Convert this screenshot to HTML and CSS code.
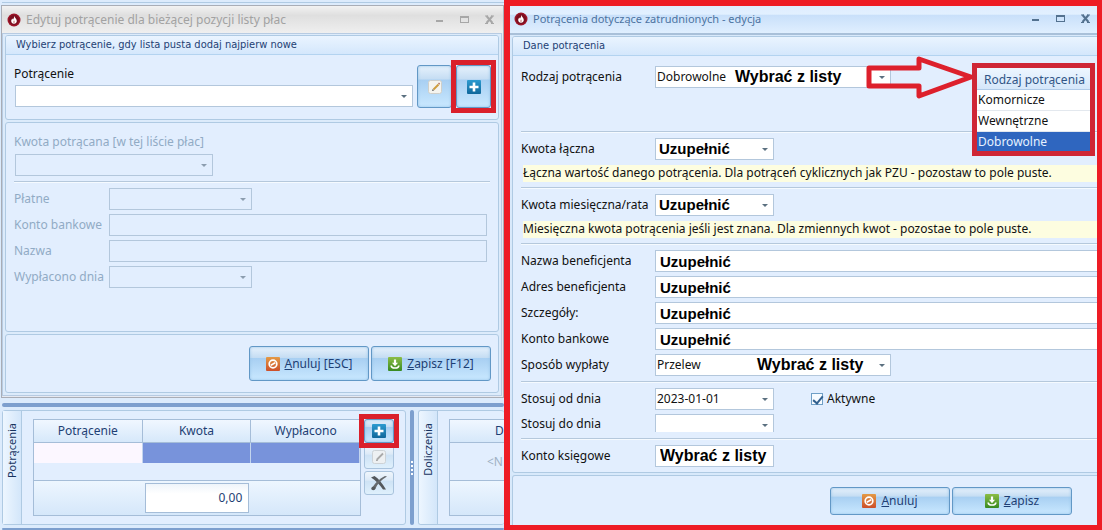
FILE: index.html
```html
<!DOCTYPE html>
<html lang="pl">
<head>
<meta charset="utf-8">
<title>Potrącenia</title>
<link rel="stylesheet" href="styles.css">
</head>
<body>
<svg class="symbols" aria-hidden="true">
  <defs>
    <linearGradient id="g-blue" x1="0" y1="0" x2="0" y2="1"><stop offset="0" stop-color="#2d9bd0"/><stop offset="1" stop-color="#0f679b"/></linearGradient>
    <linearGradient id="g-orange" x1="0" y1="0" x2="0" y2="1"><stop offset="0" stop-color="#e39a45"/><stop offset="1" stop-color="#cc4f2a"/></linearGradient>
    <linearGradient id="g-green" x1="0" y1="0" x2="0" y2="1"><stop offset="0" stop-color="#8cbd46"/><stop offset="1" stop-color="#378a22"/></linearGradient>
  </defs>
  <symbol id="flame" viewBox="0 0 14 14"><circle cx="7" cy="7" r="6.5" fill="#9c1428"/><circle cx="7" cy="7" r="5" fill="#7a0f20"/><path d="M7.2 2.8c.2 1.8 2.6 2.8 2.6 5.2 0 1.6-1.2 2.8-2.8 2.8S4.200 9.600 4.200 8c0-1.200.7-1.800 1-2.600.4.500.6.800.9 1.100C6.900 5.400 7.300 4.200 7.200 2.800z" fill="#fff"/><path d="M7 7.200c.9.900 1 1.500 1 1.900a1 1 0 0 1-2 0c0-.6.600-1 1-1.900z" fill="#d9a3a0"/></symbol>
  <symbol id="plus" viewBox="0 0 14 14"><rect width="14" height="14" rx="1" fill="url(#g-blue)"/><path d="M7 2.500v9M2.500 7h9" stroke="#fff" stroke-width="2.600"/></symbol>
  <symbol id="pencil" viewBox="0 0 14 14"><rect x=".5" y=".5" width="13" height="13" rx="2" fill="#f5f4ef" stroke="#cfcfca"/><path d="M5.500 9.500L10.500 4.500" stroke="#cf9d3e" stroke-width="2"/><path d="M4 11l.7-2 1.400 1.400z" fill="#555"/><path d="M10 3.500l1-1 1.200 1.200-1 1z" fill="#b5725c"/></symbol>
  <symbol id="pencil-off" viewBox="0 0 14 14"><rect x=".5" y=".5" width="13" height="13" rx="2" fill="#edf0f2" stroke="#cdd2d6"/><path d="M5 9.500L11 3.500" stroke="#a9a9a9" stroke-width="1.800"/><path d="M4 11l.7-2 1.400 1.400z" fill="#888"/></symbol>
  <symbol id="cancel" viewBox="0 0 14 14"><rect width="14" height="14" rx="1" fill="url(#g-orange)"/><circle cx="7" cy="7" r="3.800" fill="none" stroke="#fff" stroke-width="1.700"/><path d="M4.800 8.200l4.400-2.400" stroke="#fff" stroke-width="1.600"/></symbol>
  <symbol id="save" viewBox="0 0 14 14"><rect width="14" height="14" rx="1" fill="url(#g-green)"/><path d="M7 2.500V7" stroke="#fff" stroke-width="2.200"/><path d="M4 5.800h6L7 9.200z" fill="#fff"/><path d="M3.200 8.500c0 3.400 7.600 3.400 7.600 0" fill="none" stroke="#fff" stroke-width="1.600"/></symbol>
  <symbol id="delete" viewBox="0 0 18 16"><path d="M1 2.500L4.500 1C8.500 3.500 12.500 8.500 16 14.500L13 14.500C10 10 6 5.500 1 2.500z" fill="#54585c"/><path d="M17 1.500C11.500 4.500 7.500 8.500 5 14.500L1.500 14.500C4 9 9 4 15 1z" fill="#666a6e"/><circle cx="3.300" cy="13.300" r="1.900" fill="#54585c"/></symbol>
  <symbol id="minimize" viewBox="0 0 12 12"><path d="M2 7h7" stroke="currentColor" stroke-width="2"/></symbol>
  <symbol id="maximize" viewBox="0 0 12 12"><rect x="1.500" y="2.500" width="8" height="6" fill="none" stroke="currentColor"/><path d="M1 3h9" stroke="currentColor" stroke-width="2"/></symbol>
  <symbol id="close" viewBox="0 0 12 12"><path d="M2.500 2L8.500 9M8.500 2L2.500 9" stroke="currentColor" stroke-width="2"/><path d="M1 2h3M7 2h3M1 9.500h3M7 9.500h3" stroke="currentColor"/></symbol>
</svg>

<main class="screen">
  <div class="left">
    <div class="strip"></div>
    <section class="window window-inactive">
      <header class="titlebar">
        <svg class="app-icon"><use href="#flame"/></svg>
        <h1 class="title">Edytuj potrącenie dla bieżącej pozycji listy płac</h1>
        <div class="controls">
          <button type="button" class="control" aria-label="Minimalizuj"><svg><use href="#minimize"/></svg></button>
          <button type="button" class="control" aria-label="Maksymalizuj"><svg><use href="#maximize"/></svg></button>
          <button type="button" class="control" aria-label="Zamknij"><svg><use href="#close"/></svg></button>
        </div>
      </header>
      <div class="content">
        <div class="group">
          <h2 class="group-title">Wybierz potrącenie, gdy lista pusta dodaj najpierw nowe</h2>
          <div class="pick">
            <div class="pick-field">
              <label for="deduction">Potrącenie</label>
              <span class="combo"><select id="deduction"><option></option></select></span>
            </div>
            <button type="button" class="btn btn-tall" aria-label="Edytuj"><svg class="icon"><use href="#pencil"/></svg></button>
            <span class="marked"><button type="button" class="btn btn-tall" aria-label="Dodaj"><svg class="icon"><use href="#plus"/></svg></button></span>
          </div>
        </div>
        <div class="group group-details">
          <label for="amount">Kwota potrącana [w tej liście płac]</label>
          <span class="combo combo-amount"><select id="amount" disabled><option></option></select></span>
          <hr class="rule">
          <div class="details">
            <label for="paid">Płatne</label><span class="combo combo-short"><select id="paid" disabled><option></option></select></span>
            <label for="bank">Konto bankowe</label><input class="text" id="bank" type="text" disabled>
            <label for="name">Nazwa</label><input class="text" id="name" type="text" disabled>
            <label for="payday">Wypłacono dnia</label><span class="combo combo-short"><select id="payday" disabled><option></option></select></span>
          </div>
        </div>
        <div class="group actions">
          <button type="button" class="btn btn-action"><svg class="icon"><use href="#cancel"/></svg><span><u>A</u>nuluj [ESC]</span></button>
          <button type="button" class="btn btn-action"><svg class="icon"><use href="#save"/></svg><span><u>Z</u>apisz [F12]</span></button>
        </div>
      </div>
    </section>
    <div class="splitter"></div>
    <div class="docks">
      <section class="dock">
        <h2 class="tab">Potrącenia</h2>
        <div class="dock-body">
          <table class="grid">
            <thead><tr><th>Potrącenie</th><th>Kwota</th><th>Wypłacono</th></tr></thead>
            <tbody>
              <tr class="row-current"><td></td><td></td><td></td></tr>
              <tr class="row-blank"><td colspan="3"></td></tr>
            </tbody>
            <tfoot><tr><td></td><td><div class="total">0,00</div></td><td></td></tr></tfoot>
          </table>
          <div class="tools">
            <span class="marked marked-tool"><button type="button" class="btn btn-tool" aria-label="Dodaj potrącenie"><svg class="icon"><use href="#plus"/></svg></button></span>
            <button type="button" class="btn btn-tool btn-pale" aria-label="Edytuj potrącenie" disabled><svg class="icon"><use href="#pencil-off"/></svg></button>
            <button type="button" class="btn btn-tool btn-pale" aria-label="Usuń potrącenie"><svg class="icon icon-wide"><use href="#delete"/></svg></button>
          </div>
        </div>
      </section>
      <div class="splitter-v"><span class="grip"></span></div>
      <section class="dock dock-cut">
        <h2 class="tab">Doliczenia</h2>
        <div class="dock-body">
          <table class="grid">
            <thead><tr><th class="head-cut">D</th></tr></thead>
            <tbody><tr><td class="empty">&lt;N</td></tr></tbody>
            <tfoot><tr><td></td></tr></tfoot>
          </table>
        </div>
      </section>
    </div>
    <div class="splitter splitter-last"></div>
  </div>

  <section class="window window-active">
    <header class="titlebar">
      <svg class="app-icon"><use href="#flame"/></svg>
      <h1 class="title">Potrącenia dotyczące zatrudnionych - edycja</h1>
      <div class="controls">
        <button type="button" class="control" aria-label="Minimalizuj"><svg><use href="#minimize"/></svg></button>
        <button type="button" class="control" aria-label="Maksymalizuj"><svg><use href="#maximize"/></svg></button>
        <button type="button" class="control" aria-label="Zamknij"><svg><use href="#close"/></svg></button>
      </div>
    </header>
    <div class="content">
      <div class="group">
        <h2 class="group-title">Dane potrącenia</h2>
        <div class="form">
          <div class="row row-kind">
            <label for="kind">Rodzaj potrącenia</label>
            <div class="field">
              <span class="combo combo-wide"><select id="kind"><option>Dobrowolne</option><option>Komornicze</option><option>Wewnętrzne</option></select></span>
              <span class="note note-kind">Wybrać z listy</span>
              <svg class="arrow" viewBox="0 0 112 46"><path d="M5 14H55V5L107 23L55 42V32H5Z"/></svg>
              <div class="popup">
                <div class="popup-title">Rodzaj potrącenia</div>
                <ul class="popup-list"><li>Komornicze</li><li>Wewnętrzne</li><li class="selected">Dobrowolne</li></ul>
              </div>
            </div>
          </div>
          <hr class="rule">
          <div class="row"><label for="sum">Kwota łączna</label><span class="combo combo-small combo-bold"><select id="sum"><option>Uzupełnić</option></select></span></div>
          <p class="hint">Łączna wartość danego potrącenia. Dla potrąceń cyklicznych jak PZU - pozostaw to pole puste.</p>
          <hr class="rule">
          <div class="row"><label for="rate">Kwota miesięczna/rata</label><span class="combo combo-small combo-bold"><select id="rate"><option>Uzupełnić</option></select></span></div>
          <p class="hint">Miesięczna kwota potrącenia jeśli jest znana. Dla zmiennych kwot - pozostae to pole puste.</p>
          <hr class="rule">
          <div class="row"><label for="b-name">Nazwa beneficjenta</label><input class="text text-bold" id="b-name" type="text" value="Uzupełnić"></div>
          <div class="row"><label for="b-address">Adres beneficjenta</label><input class="text text-bold" id="b-address" type="text" value="Uzupełnić"></div>
          <div class="row"><label for="b-details">Szczegóły:</label><input class="text text-bold" id="b-details" type="text" value="Uzupełnić"></div>
          <div class="row"><label for="b-bank">Konto bankowe</label><input class="text text-bold" id="b-bank" type="text" value="Uzupełnić"></div>
          <div class="row row-method"><label for="method">Sposób wypłaty</label>
            <div class="field"><span class="combo combo-wide"><select id="method"><option>Przelew</option></select></span><span class="note note-method">Wybrać z listy</span></div></div>
          <hr class="rule">
          <div class="row"><label for="from">Stosuj od dnia</label>
            <div class="pair"><span class="combo combo-small"><select id="from"><option>2023-01-01</option></select></span>
              <label class="check"><input type="checkbox" checked>Aktywne</label></div></div>
          <div class="row row-low"><label for="to">Stosuj do dnia</label><span class="combo combo-small combo-low"><select id="to"><option></option></select></span></div>
          <hr class="rule">
          <div class="row"><label for="ledger">Konto księgowe</label><input class="text text-bold text-small" id="ledger" type="text" value="Wybrać z listy"></div>
        </div>
      </div>
      <div class="group actions">
        <button type="button" class="btn btn-action"><svg class="icon"><use href="#cancel"/></svg><span><u>A</u>nuluj</span></button>
        <button type="button" class="btn btn-action"><svg class="icon"><use href="#save"/></svg><span><u>Z</u>apisz</span></button>
      </div>
    </div>
  </section>
</main>
</body>
</html>
```
FILE: styles.css
```css
* { box-sizing: border-box; }

:root {
  --line: #afcae3;
  --field-line: #b3c7dc;
  --face: #e2eefe;
  --ink: #1e3f74;
  --mark: #da202b;
}

body {
  margin: 0;
  background: #dcebfc;
  color: #111;
  font: 12px/16px "Noto Sans", "DejaVu Sans", sans-serif;
}

h1, h2, p, ul { margin: 0; padding: 0; font: inherit; }
ul { list-style: none; }
svg { display: block; }
button, select, input { font: inherit; color: inherit; }
.symbols { position: absolute; width: 0; height: 0; }

.screen { display: grid; grid-template-columns: 504fr 598fr; min-height: 100vh; }
.left { display: flex; flex-direction: column; min-width: 0; overflow: hidden; }
.strip { height: 5px; margin-left: 2px; }
.strip::before { content: ""; display: block; height: 2px; border-bottom: 1px solid var(--line); }

/* Windows */
.window { display: flex; flex-direction: column; min-width: 0; }
.window-inactive { margin-left: 1px; height: 393px; border: 1px solid #a9adb6; background: #e6e9f1; }
.window-active { border: 6px solid #ee1c25; border-width: 6px 5px 5px 6px; background: #d8e9fb; overflow: hidden; }
.titlebar { display: flex; align-items: center; gap: 5px; height: 27px; padding: 0 7px 0 5px; }
.window-inactive .titlebar { background: linear-gradient(#f2f2f2, #dfdfdf 35%, #efefef); color: #a2a2a2; }
.window-active .titlebar { height: 29px; padding: 0 5px 2px 4px; border-bottom: 2px solid #a9c0d9; background: linear-gradient(#deedff, #e2f0ff 30%, #c9e0fa 35%, #e0efff); color: #4c73a1; }
.app-icon { width: 14px; height: 14px; }
.title { flex: 1; white-space: nowrap; }
.window-active .title { font-size: 11px; }
.controls { display: flex; gap: 13px; }
.control { width: 12px; height: 12px; padding: 0; border: 0; background: none; color: #a7a7a7; }
.control svg { width: 12px; height: 12px; }
.window-active .control { color: #53718f; }

.content { display: flex; flex-direction: column; flex: 1; gap: 2px; }
.window-inactive .content { padding: 1px 2px 2px; margin: 0 1px 1px 0; border: 1px solid #b7cbe2; background: #dcebfb; }
.window-active .content { padding: 1px 0 0 2px; }
.group { border: 1px solid var(--line); border-radius: 3px; background: var(--face); }
.window-active .group { margin-right: -4px; }
.window-active .group:last-child { flex: 1; border-bottom: 0; border-radius: 3px 3px 0 0; }
.group-title { height: 19px; padding: 1px 10px; border-bottom: 1px solid #b3d3f0; border-radius: 2px 2px 0 0; background: linear-gradient(#eaf4ff, #d4e7fc); color: var(--ink); font: 11px/16px "DejaVu Sans Condensed", "DejaVu Sans", sans-serif; font-stretch: condensed; white-space: nowrap; }

/* Fields */
label { white-space: nowrap; }
.combo { position: relative; display: block; height: 22px; }
.combo::after { content: ""; position: absolute; right: 6px; top: 10px; border: 3px solid transparent; border-top: 3px solid #5b7080; border-bottom: 0; pointer-events: none; }
.combo select { appearance: none; display: block; width: 100%; height: 100%; padding: 0 16px 0 1px; border: 1px solid var(--field-line); border-radius: 0; background: #fff; color: #111; }
.text { width: 100%; height: 22px; padding: 0 4px; border: 1px solid var(--field-line); border-radius: 0; background: #fff; color: #111; }
.combo select:disabled, .text:disabled { background: transparent; opacity: 1; }
.combo:has(:disabled)::after { border-top-color: #8c9daf; }
.combo-bold select, .text-bold, .note { font: bold 15px/20px "Liberation Sans", Arial, sans-serif; color: #000; }
.combo-bold select { padding-left: 3px; }
.note, .text-small { font-size: 16px; }
.combo-wide { width: 236px; }
.combo-small, .text-small { width: 119px; }
.combo-low { height: 18px; }
.combo-low select { border-bottom: 0; }
.rule { width: 100%; height: 2px; margin: 0; border: 0; border-top: 1px solid #b5c8dc; background: #f5faff; }

/* Buttons */
.btn { display: flex; align-items: center; justify-content: center; gap: 5px; padding: 0; border: 1px solid #6298c6; border-radius: 3px; background: linear-gradient(#e6f1fc, #c5ddf3 32%, #a8cff2 34%, #c9e8ff); box-shadow: inset 0 0 3px #95c0e6; color: var(--ink); }
.btn-tall { width: 35px; height: 43px; }
.btn-action { width: 120px; height: 35px; }
.window-active .btn-action { height: 28px; }
.btn-tool { width: 30px; height: 24px; }
.btn-pale { border-color: #a9c3dd; background: linear-gradient(#f0f6fc, #dceaf7 38%, #cde2f5 40%, #dff0fc); box-shadow: none; }
.icon { width: 14px; height: 14px; }
.icon-wide { width: 18px; height: 16px; }
.marked { display: block; height: 43px; outline: 5px solid var(--mark); }
.marked-tool { position: relative; z-index: 1; height: 24px; }
.actions { display: flex; justify-content: flex-end; align-items: center; gap: 2px; }
.window-inactive .actions { height: 59px; padding-right: 7px; }
.window-active .actions { padding: 0 28px 0 0; }

/* Left window */
.pick { display: flex; gap: 4px; height: 64px; padding: 10px 7px 0 9px; }
.pick-field { flex: 1; padding-top: 1px; }
.pick-field label { display: block; height: 19px; margin-left: -1px; }
.group-details { flex: 1; padding: 11px 8px 0; color: #91abc5; }
.group-details > label { display: block; height: 20px; }
.combo-amount { width: 198px; margin-left: 1px; }
.group-details .rule { margin: 5px 0; }
.details { display: grid; grid-template-columns: 95px 1fr; row-gap: 4px; align-items: center; padding-right: 3px; }
.combo-short { width: 143px; }

/* Docked lists */
.splitter { flex: none; height: 4px; margin: 5px 0 3px 2px; border-radius: 2px; background: #7d9fce; }
.splitter-last { height: 2px; margin: 3px 0 0 2px; }
.docks { display: flex; flex: none; gap: 4px; height: 115px; padding-left: 2px; }
.dock { display: flex; flex: none; width: 404px; border: 1px solid var(--line); border-radius: 3px; background: var(--face); }
.dock-cut { flex: 1; width: auto; min-width: 0; overflow: hidden; border-right: 0; }
.tab { width: 19px; padding: 12px 0; border-right: 1px solid var(--line); background: linear-gradient(90deg, #edf6ff, #d3e6fa); color: #17335f; font-size: 11px; line-height: 18px; writing-mode: sideways-lr; text-align: right; }
.dock-body { display: flex; flex: 1; gap: 3px; padding: 8px 11px 0 11px; }
.dock-cut .dock-body { padding-right: 0; }
.splitter-v { display: flex; align-items: center; justify-content: center; width: 4px; border-radius: 2px; background: #7d9fce; }
.grip { width: 2px; height: 14px; background: repeating-linear-gradient(#fff 0 2px, #7d9fce 2px 4px); }
.grid { flex: 1; width: 100%; height: 97px; border: 1px solid #a5bdd8; border-spacing: 0; table-layout: fixed; color: var(--ink); }
.grid th, .grid td { padding: 0; font-weight: normal; }
.grid th { height: 23px; border-right: 1px solid #a5bdd8; border-bottom: 1px solid #a5bdd8; background: linear-gradient(#f0f7ff, #d6e8fa); }
.grid th:last-child { border-right: 0; }
.row-current td { height: 20px; border-right: 1px solid #c3d5ee; background: #7893db; }
.row-current td:first-child { background: #fcf7ff; }
.row-blank td { height: 17px; }
.grid tfoot td { height: 35px; border-top: 1px solid #a5bdd8; background: linear-gradient(#edf6ff, #d5e7fa); }
.total { margin: 0 2px; padding: 6px; border: 1px solid #a5bdd8; background: linear-gradient(#eff5fa, #fff 35%); text-align: right; }
.tools { display: flex; flex-direction: column; gap: 2px; width: 30px; }
.dock-cut .grid { border-right: 0; }
.grid .head-cut { padding-left: 45px; text-align: left; }
.grid .empty { height: 37px; padding-left: 37px; color: #9fb1c4; }

/* Right window */
.form { display: flex; flex-direction: column; padding: 10px 0 1px 8px; }
.row { display: grid; grid-template-columns: 134px 1fr; align-items: center; margin-bottom: 4px; }
.row-kind { margin-bottom: 43px; }
.row-method { margin-bottom: 5px; }
.row-low { align-items: end; margin-bottom: 6px; }
.form .rule { margin-bottom: 5px; }
.hint { height: 17px; margin: 1px 0 5px 2px; background: #fdfde0; white-space: nowrap; }
.field, .pair { position: relative; display: flex; align-items: center; }
.pair { gap: 37px; }
.check { display: flex; align-items: center; gap: 4px; }
.check input { appearance: none; width: 12px; height: 12px; margin: 0; border: 1px solid #6f9fc6; background: #f7fbff; }
.check input:checked::before { content: ""; display: block; width: 4px; height: 8px; margin: 0 3px; border: solid #315f8e; border-width: 0 2px 2px 0; transform: rotate(40deg); }
.note { position: absolute; top: 1px; white-space: nowrap; pointer-events: none; }
.note-kind { left: 80px; }
.note-method { left: 102px; }
.arrow { position: absolute; left: 209px; top: -12px; width: 112px; height: 46px; fill: none; stroke: #dd202c; stroke-width: 5px; stroke-linejoin: round; }
.popup { position: absolute; left: 317px; top: -3px; width: 123px; border: 5px solid #cf2635; background: #fff; }
.popup-title { height: 22px; padding: 4px 0 0 7px; border-bottom: 1px solid #b0cbe8; background: linear-gradient(#edf6ff, #d5e7fa); color: #315586; white-space: nowrap; }
.popup-list li { height: 21px; padding: 2px 1px; border-bottom: 1px solid #e3e8ee; }
.popup-list .selected { height: 19px; border: 0; background: #2f66bf; color: #e6f2ff; }
```
